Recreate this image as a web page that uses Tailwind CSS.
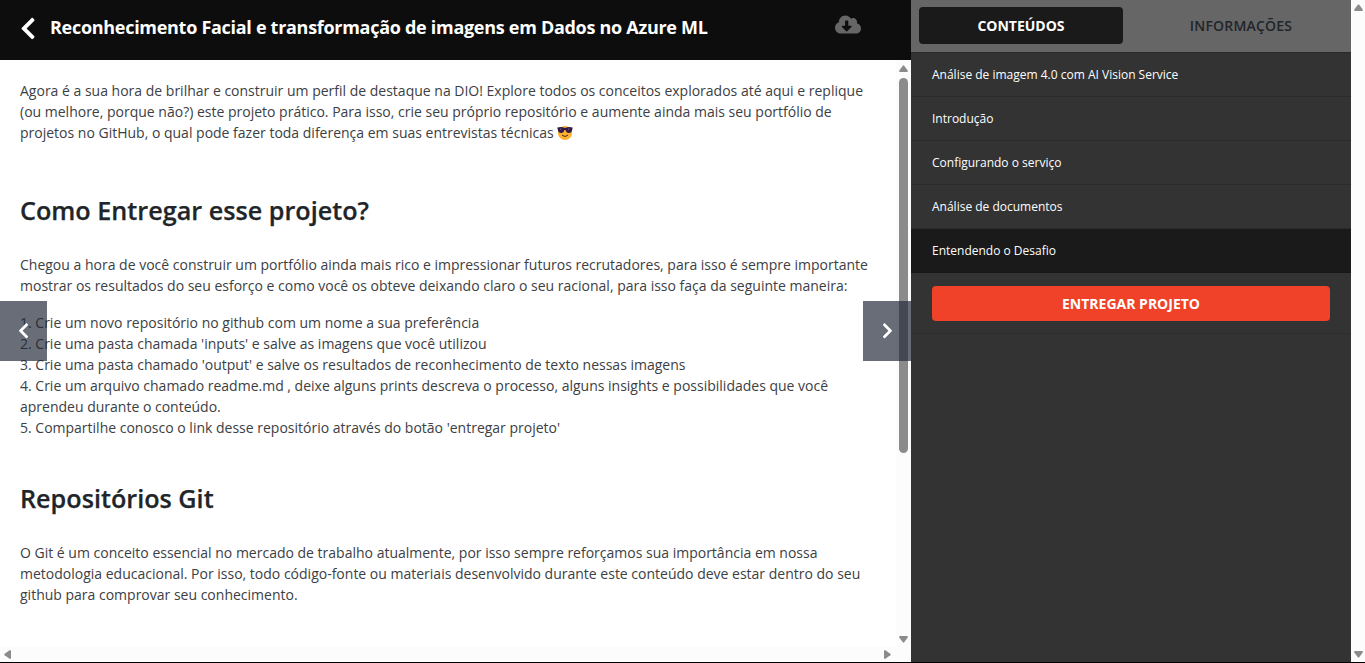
<!DOCTYPE html>
<html lang="pt-BR">
<head>
<meta charset="utf-8">
<title>Reconhecimento Facial</title>
<script src="https://cdn.jsdelivr.net/npm/@tailwindcss/browser@4"></script>
</head>
<body class="flex h-[663px] w-[1365px] flex-col overflow-hidden bg-white font-['Open_Sans',sans-serif] text-[#212529]">
<div class="flex h-[662px]">
  <main class="relative flex w-[911px] shrink-0 flex-col">
    <header class="flex h-[60px] shrink-0 items-center bg-[#0d0d0d] pb-[5px]">
      <svg class="ml-[20px] mt-[1px] h-[25px] w-[16px] shrink-0" viewBox="0 0 320 512" fill="#fff"><path d="M34.52 239.03L228.87 44.69c9.37-9.37 24.57-9.37 33.94 0l22.67 22.67c9.36 9.36 9.37 24.52.04 33.9L131.49 256l154.02 154.75c9.34 9.38 9.32 24.54-.04 33.9l-22.67 22.67c-9.37 9.37-24.57 9.37-33.94 0L34.52 272.97c-9.37-9.37-9.37-24.57 0-33.94z"/></svg>
      <h1 class="ml-[14px] whitespace-nowrap text-[18px] font-bold leading-[27px] tracking-[-0.29px] text-white"><span>Reconhecimento Facial e transformação de imagens em Dados no Azure ML</span></h1>
      <svg class="ml-auto mr-[50px] -mt-[7px] h-[21px] w-[26px] shrink-0" viewBox="0 0 640 512" fill="#666"><path d="M537.6 226.6c4.1-10.7 6.4-22.4 6.4-34.6 0-53-43-96-96-96-19.7 0-38.1 6-53.3 16.2C367 64.2 315.3 32 256 32c-88.4 0-160 71.6-160 160 0 2.7.1 5.4.2 8.1C40.2 219.8 0 273.2 0 336c0 79.5 64.5 144 144 144h368c70.7 0 128-57.3 128-128 0-61.9-44-113.6-102.4-125.4zm-132.9 88.7L299.3 420.7c-6.2 6.2-16.4 6.2-22.6 0L171.3 315.3c-10.1-10.1-2.9-27.3 11.3-27.3H248V176c0-8.8 7.2-16 16-16h48c8.8 0 16 7.2 16 16v112h65.4c14.2 0 21.4 17.2 11.3 27.3z"/></svg>
    </header>
    <div class="flex h-[587px]">
      <article class="w-[896px] whitespace-nowrap pl-[20px] pt-[20px] text-[14px] leading-[21px]">
        <p class="text-[#3c4044]">Agora é a sua hora de brilhar e construir um perfil de destaque na DIO! Explore todos os conceitos explorados até aqui e replique<br>(ou melhore, porque não?) este projeto prático. Para isso, crie seu próprio repositório e aumente ainda mais seu portfólio de<br>projetos no GitHub, o qual pode fazer toda diferença em suas entrevistas técnicas
          <svg class="inline-block h-[16px] w-[16px] align-[-3px]" viewBox="0 0 16 16"><circle cx="8" cy="8" r="7" fill="#ffb02e"/><path d="M.3 2.6Q4.3 1.4 8 3q3.7-1.6 7.7-.4l-.5 2.2C14.9 7 13.7 8 12 8 10 8 9 6.7 8.6 4.9H7.4C7 6.7 6 8 4 8 2.3 8 1.1 7 .8 4.8z" fill="#321b41"/><path d="M3 4.3l1.3-.4M11 4.3l1.3-.4" stroke="#8d65c5" stroke-width=".9"/><path d="M5.3 10.4q2.7 2.5 5.4 0" fill="none" stroke="#402a32" stroke-width="1" stroke-linecap="round"/></svg></p>
        <h2 class="mt-[53px] text-[25.2px] font-semibold leading-[29px] [-webkit-text-stroke:0.25px_#212529]">Como Entregar esse projeto?</h2>
        <p class="mt-[29px] text-[#3c4044]">Chegou a hora de você construir um portfólio ainda mais rico e impressionar futuros recrutadores, para isso é sempre importante<br>mostrar os resultados do seu esforço e como você os obteve deixando claro o seu racional, para isso faça da seguinte maneira:</p>
        <p class="mt-[16px] text-[#3c4044]">1. Crie um novo repositório no github com um nome a sua preferência<br>2. Crie uma pasta chamada 'inputs' e salve as imagens que você utilizou<br>3. Crie uma pasta chamado 'output' e salve os resultados de reconhecimento de texto nessas imagens<br>4. Crie um arquivo chamado readme.md , deixe alguns prints descreva o processo, alguns insights e possibilidades que você<br>aprendeu durante o conteúdo.<br>5. Compartilhe conosco o link desse repositório através do botão 'entregar projeto'</p>
        <h2 class="mt-[46px] text-[25.2px] font-semibold leading-[29px] [-webkit-text-stroke:0.25px_#212529]">Repositórios Git</h2>
        <p class="mt-[29px] text-[#3c4044]">O Git é um conceito essencial no mercado de trabalho atualmente, por isso sempre reforçamos sua importância em nossa<br>metodologia educacional. Por isso, todo código-fonte ou materiais desenvolvido durante este conteúdo deve estar dentro do seu<br>github para comprovar seu conhecimento.</p>
      </article>
      <div class="flex w-[15px] flex-col items-center bg-[#fcfcfc] pb-[4px] pt-[5px]">
        <svg class="h-[7px] w-[9px]" viewBox="0 0 9 7" fill="#8b8b8b"><path d="M3.8.7Q4.5-.2 5.2.7L8.7 5.5Q9.2 7 8 7H1Q-.2 7 .3 5.500z"/></svg>
        <div class="mt-[6px] h-[375px] w-[9px] rounded-full bg-[#8b8b8b]"></div>
        <svg class="mt-auto h-[7px] w-[9px] rotate-180" viewBox="0 0 9 7" fill="#8b8b8b"><path d="M3.8.7Q4.5-.2 5.2.7L8.7 5.5Q9.2 7 8 7H1Q-.2 7 .3 5.500z"/></svg>
      </div>
    </div>
    <div class="flex h-[15px] items-center justify-between bg-[#fcfcfc] pl-[4px] pr-[20px]">
      <svg class="h-[9px] w-[7px]" viewBox="0 0 7 9" fill="#8b8b8b"><path d="M.7 3.8Q-.2 4.5.7 5.2L5.5 8.7Q7 9.2 7 8V1Q7-.2 5.5.3z"/></svg>
      <svg class="h-[9px] w-[7px] rotate-180" viewBox="0 0 7 9" fill="#8b8b8b"><path d="M.7 3.8Q-.2 4.5.7 5.2L5.5 8.7Q7 9.2 7 8V1Q7-.2 5.5.3z"/></svg>
    </div>
    <div class="absolute left-0 top-[301px] flex h-[60px] w-[47px] items-center justify-center bg-[#212836]/68">
      <svg class="h-[17.5px] w-[11px]" viewBox="0 0 320 512" fill="#fff"><path d="M34.52 239.03L228.87 44.69c9.37-9.37 24.57-9.37 33.94 0l22.67 22.67c9.36 9.36 9.37 24.52.04 33.9L131.49 256l154.02 154.75c9.34 9.38 9.32 24.54-.04 33.9l-22.67 22.67c-9.37 9.37-24.57 9.37-33.94 0L34.52 272.97c-9.37-9.37-9.37-24.57 0-33.94z"/></svg>
    </div>
    <div class="absolute left-[863px] top-[301px] flex h-[60px] w-[48px] items-center justify-center bg-[#212836]/68">
      <svg class="h-[17.5px] w-[11px] -scale-x-100" viewBox="0 0 320 512" fill="#fff"><path d="M34.52 239.03L228.87 44.69c9.37-9.37 24.57-9.37 33.94 0l22.67 22.67c9.36 9.36 9.37 24.52.04 33.9L131.49 256l154.02 154.75c9.34 9.38 9.32 24.54-.04 33.9l-22.67 22.67c-9.37 9.37-24.57 9.37-33.94 0L34.52 272.97c-9.37-9.37-9.37-24.57 0-33.94z"/></svg>
    </div>
  </main>
  <aside class="flex w-[440px] shrink-0 flex-col bg-[#333] text-white">
    <nav class="flex h-[52px] items-start bg-[#666] pl-[8px] pt-[7px] text-[14px] font-bold leading-[37px]">
      <div class="h-[37px] w-[204px] rounded-[4px] bg-[#1a1a1a] text-center"><span>CONTEÚDOS</span></div>
      <div class="ml-[16px] h-[37px] w-[204px] text-center font-semibold text-[#212529]"><span class="tracking-[0.2px]">INFORMAÇÕES</span></div>
    </nav>
    <ul class="border-t border-[#292929] text-[12px] leading-[43px]">
      <li class="h-[44px] border-b border-[#2b2b2b] pl-[21px]"><span>Análise de imagem 4.0 com AI Vision Service</span></li>
      <li class="h-[44px] border-b border-[#2b2b2b] pl-[21px]"><span>Introdução</span></li>
      <li class="h-[44px] border-b border-[#2b2b2b] pl-[21px]"><span>Configurando o serviço</span></li>
      <li class="h-[44px] border-b border-[#2b2b2b] pl-[21px]"><span>Análise de documentos</span></li>
      <li class="h-[44px] border-b border-[#171717] bg-[#1a1a1a] pl-[21px]"><span>Entendendo o Desafio</span></li>
    </ul>
    <div class="h-[61px] border-b border-[#2d2d2d] px-[21px] pt-[13px]">
      <div class="h-[35px] rounded-[4px] bg-[#f04228] text-center text-[14px] font-bold leading-[35px]"><span>ENTREGAR PROJETO</span></div>
    </div>
  </aside>
  <div class="flex w-[14px] flex-col items-center justify-between bg-[#fcfcfc] pb-[4px] pt-[4px]">
    <svg class="h-[7px] w-[9px]" viewBox="0 0 9 7" fill="#8b8b8b"><path d="M3.8.7Q4.5-.2 5.2.7L8.7 5.5Q9.2 7 8 7H1Q-.2 7 .3 5.500z"/></svg>
    <svg class="h-[7px] w-[9px] rotate-180" viewBox="0 0 9 7" fill="#8b8b8b"><path d="M3.8.7Q4.5-.2 5.2.7L8.7 5.5Q9.2 7 8 7H1Q-.2 7 .3 5.500z"/></svg>
  </div>
</div>
<div class="h-px bg-black"></div>
</body>
</html>
